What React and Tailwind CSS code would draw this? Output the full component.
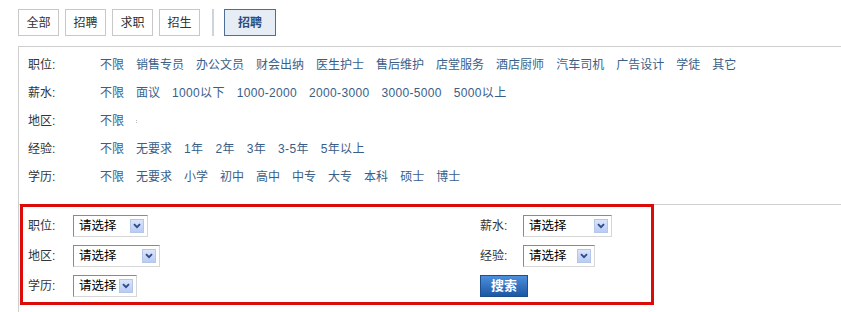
import React from "react";

const font = { fontFamily: '"Liberation Sans", "Noto Sans CJK SC", sans-serif' };

const rows = [
  { label: "职位:", items: ["不限", "销售专员", "办公文员", "财会出纳", "医生护士", "售后维护", "店堂服务", "酒店厨师", "汽车司机", "广告设计", "学徒", "其它"] },
  { label: "薪水:", items: ["不限", "面议", "1000以下", "1000-2000", "2000-3000", "3000-5000", "5000以上"] },
  { label: "地区:", items: ["不限"], dot: true },
  { label: "经验:", items: ["不限", "无要求", "1年", "2年", "3年", "3-5年", "5年以上"] },
  { label: "学历:", items: ["不限", "无要求", "小学", "初中", "高中", "中专", "大专", "本科", "硕士", "博士"] },
];

function Select({ w }) {
  return (
    <div
      className="h-[22px] flex items-center justify-between bg-white border border-t-[#8a8a8a] border-l-[#8a8a8a] border-r-[#d6d6d6] border-b-[#d6d6d6] pl-[5px] pr-[3px]"
      style={{ width: w }}
    >
      <span className="text-[12.5px] text-black leading-none">请选择</span>
      <span className="w-[14px] h-[14px] flex items-center justify-center border border-[#b4c6ea] bg-gradient-to-b from-[#dbe5fb] to-[#b9cbf2]">
        <svg width="8" height="6" viewBox="0 0 8 6">
          <path d="M1 1.2 L4 4.2 L7 1.2" stroke="#2d4a8a" strokeWidth="1.9" fill="none" />
        </svg>
      </span>
    </div>
  );
}

function Field({ label, w, labelW }) {
  return (
    <div className="flex items-center h-[22px]">
      <span className="text-[12px] text-[#333]" style={{ width: labelW }}>{label}</span>
      <Select w={w} />
    </div>
  );
}

export default function App() {
  return (
    <div className="bg-white w-[841px] h-[312px] overflow-hidden" style={font}>
      <div className="flex items-center pt-[9px] pl-[18px]">
        <div className="flex gap-[6px]">
          {["全部", "招聘", "求职", "招生"].map((t) => (
            <div key={t} className="w-[41px] h-[27px] border border-[#c8c8c8] flex items-center justify-center text-[12px] text-[#333]">
              {t}
            </div>
          ))}
        </div>
        <div className="w-[2px] h-[27px] bg-[#ccd4dc] ml-[12px] mr-[10px]" />
        <div className="w-[52px] h-[27px] border border-[#4d6e95] bg-[#e6edf5] flex items-center justify-center text-[12px] font-bold text-[#2c4f7c]">
          招聘
        </div>
      </div>
      <div className="mt-[10px] ml-[18px] border-l border-t border-[#cfcfcf] h-[300px]">
        <div className="pt-[4px] pb-[13px]">
          {rows.map((r) => (
            <div key={r.label} className="flex items-center h-[28px] text-[12px]">
              <span className="w-[81px] pl-[9px] text-[#333]">{r.label}</span>
              <div className="flex gap-[12px] text-[#3a5e88]">
                {r.items.map((it) => (
                  <span key={it} className={/\d/.test(it) ? "tracking-[0.33px]" : ""}>{it}</span>
                ))}
                {r.dot && (
                  <span className="flex flex-col gap-[1px] justify-center">
                    <span className="w-px h-px bg-[#bbb]" />
                    <span className="w-px h-px bg-[#bbb]" />
                  </span>
                )}
              </div>
            </div>
          ))}
        </div>
        <div className="border-t border-[#cfcfcf]">
          <div className="-mt-px ml-[1px] w-[634px] h-[101px] border-[3px] border-[#dd0a0a] flex pt-[8px] pl-[5px]">
            <div className="w-[452px] flex flex-col gap-[8px]">
              <Field label="职位:" w={75} labelW={45} />
              <Field label="地区:" w={87} labelW={45} />
              <Field label="学历:" w={64} labelW={45} />
            </div>
            <div className="flex flex-col gap-[8px]">
              <Field label="薪水:" w={89} labelW={43} />
              <Field label="经验:" w={72} labelW={43} />
              <div className="w-[48px] h-[22px] border border-[#1d4f8e] bg-gradient-to-b from-[#4d8fdc] to-[#1b58a6] flex items-center justify-center text-white text-[13px] font-bold">
                搜索
              </div>
            </div>
          </div>
        </div>
      </div>
    </div>
  );
}
